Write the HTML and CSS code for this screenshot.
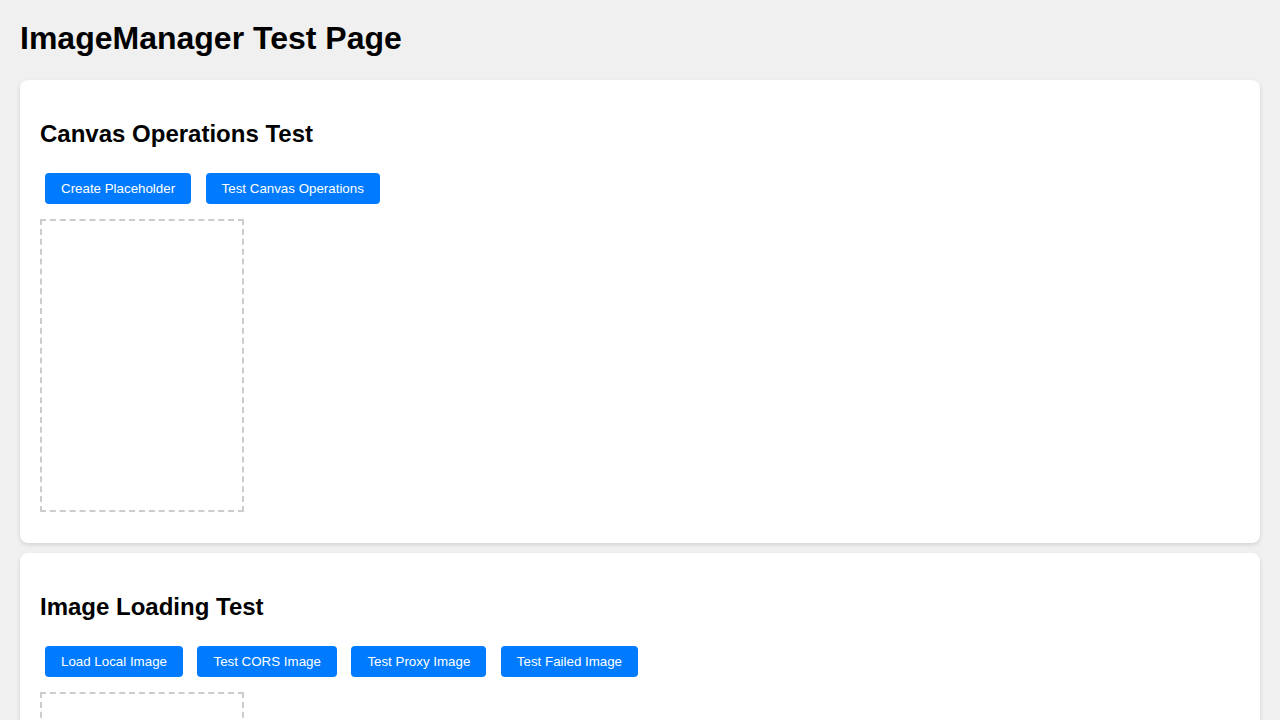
FILE: index.html
```html
<!DOCTYPE html>
<html>
<head>
<meta charset="utf-8">
<title>ImageManager Test Page</title>
<link rel="stylesheet" href="styles.css">
</head>
<body>
<h1 class="title">ImageManager Test Page</h1>
<section class="card">
  <h2 class="card-title">Canvas Operations Test</h2>
  <div class="actions">
    <button class="btn">Create Placeholder</button>
    <button class="btn">Test Canvas Operations</button>
  </div>
  <div class="canvas-box"></div>
</section>
<section class="card">
  <h2 class="card-title">Image Loading Test</h2>
  <div class="actions">
    <button class="btn">Load Local Image</button>
    <button class="btn">Test CORS Image</button>
    <button class="btn">Test Proxy Image</button>
    <button class="btn">Test Failed Image</button>
  </div>
  <div class="canvas-box"></div>
</section>
</body>
</html>
```
FILE: styles.css
```css
html, body {
  margin: 0;
  padding: 0;
}
body {
  background: #f0f0f0;
  padding: 20px;
  font-family: "Liberation Sans", Arial, Helvetica, sans-serif;
  color: #000;
}
.title {
  font-size: 32px;
  font-weight: bold;
  line-height: 37px;
  margin: 0 0 23px 0;
}
.card {
  background: #fff;
  border-radius: 8px;
  box-shadow: 0 2px 4px rgba(0, 0, 0, 0.12);
  padding: 20px;
  margin-bottom: 10px;
}
.card-title {
  font-size: 24px;
  font-weight: bold;
  line-height: 28px;
  margin: 20px 0 25px 0;
}
.actions {
  display: flex;
  gap: 14.5px;
  padding: 0 5px;
  margin-bottom: 15px;
}
.btn {
  font-family: "Liberation Sans", Arial, Helvetica, sans-serif;
  font-size: 13.333px;
  line-height: 15px;
  height: 31px;
  color: #fff;
  background: #007bff;
  border: none;
  border-radius: 4px;
  padding: 8px 16px;
}
.canvas-box {
  width: 200px;
  height: 289px;
  border: 2px dashed #ccc;
  margin-bottom: 11px;
}
```
